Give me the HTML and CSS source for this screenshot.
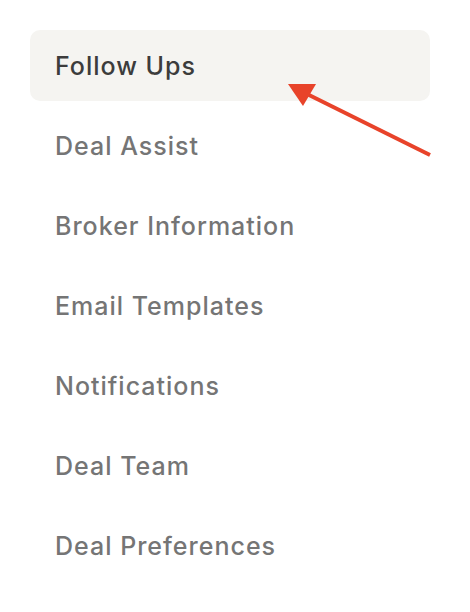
FILE: index.html
```html
<!DOCTYPE html>
<html lang="en">
<head>
  <meta charset="UTF-8" />
  <title>Settings Menu</title>
  <link rel="stylesheet" href="styles.css">
</head>
<body>
  <nav class="side-menu">
    <a href="#" class="menu-item active">Follow Ups</a>
    <a href="#" class="menu-item">Deal Assist</a>
    <a href="#" class="menu-item">Broker Information</a>
    <a href="#" class="menu-item">Email Templates</a>
    <a href="#" class="menu-item">Notifications</a>
    <a href="#" class="menu-item">Deal Team</a>
    <a href="#" class="menu-item">Deal Preferences</a>
  </nav>
  <svg class="pointer-arrow" width="470" height="612" viewBox="0 0 470 612">
    <line x1="430" y1="155" x2="305" y2="93" stroke="#e8432a" stroke-width="4" />
    <polygon points="288,84 316,84 303,106" fill="#e8432a" />
  </svg>
</body>
</html>
```

FILE: styles.css
```css
* {
  box-sizing: border-box;
  margin: 0;
  padding: 0;
}
body {
  font-family: 'Inter', sans-serif;
  background: #fff;
  width: 470px;
  height: 612px;
  position: relative;
  overflow: hidden;
}
.side-menu {
  display: flex;
  flex-direction: column;
  gap: 9px;
  padding: 30px 40px 0 30px;
}
.menu-item {
  display: flex;
  align-items: center;
  height: 71px;
  padding-left: 25px;
  border-radius: 10px;
  text-decoration: none;
  color: #757575;
  font-size: 25px;
  font-weight: 500;
  letter-spacing: 1px;
}
.menu-item.active {
  background: #f5f4f1;
  color: #3c3c3c;
}
.pointer-arrow {
  position: absolute;
  top: 0;
  left: 0;
}
```
